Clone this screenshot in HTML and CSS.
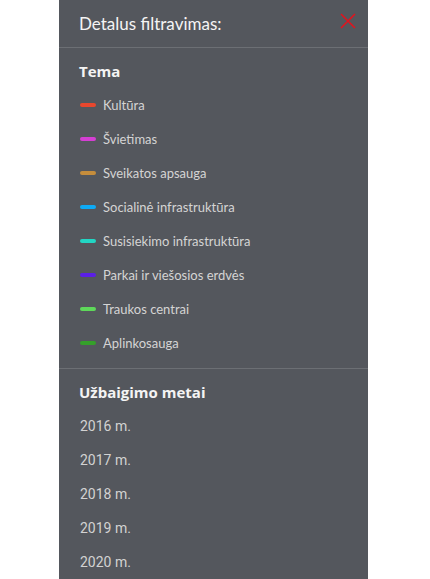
FILE: index.html
```html
<!DOCTYPE html>
<html lang="lt">
<head>
<meta charset="utf-8">
<title>Detalus filtravimas</title>
<link rel="stylesheet" href="styles.css">
</head>
<body>
<aside class="panel">
  <header class="panel-header">
    <h1 class="panel-title">Detalus filtravimas:</h1>
    <button class="close" aria-label="Uždaryti">
      <svg width="16" height="16" viewBox="0 0 16 16"><path d="M1 1 L15 15 M15 1 L1 15" stroke="#e0141e" stroke-width="1.6" fill="none"/></svg>
    </button>
  </header>
  <section class="section first">
    <h2 class="section-title">Tema</h2>
    <ul class="list">
      <li class="item"><span class="swatch" style="background:#e8472e"></span>Kultūra</li>
      <li class="item"><span class="swatch" style="background:#d53fd3"></span>Švietimas</li>
      <li class="item"><span class="swatch" style="background:#c58d3c"></span>Sveikatos apsauga</li>
      <li class="item"><span class="swatch" style="background:#0eaaf5"></span>Socialinė infrastruktūra</li>
      <li class="item"><span class="swatch" style="background:#22d6c4"></span>Susisiekimo infrastruktūra</li>
      <li class="item"><span class="swatch" style="background:#5b1fe6"></span>Parkai ir viešosios erdvės</li>
      <li class="item"><span class="swatch" style="background:#5ed85a"></span>Traukos centrai</li>
      <li class="item"><span class="swatch" style="background:#35a02a"></span>Aplinkosauga</li>
    </ul>
  </section>
  <section class="section second">
    <h2 class="section-title">Užbaigimo metai</h2>
    <ul class="list years">
      <li class="item year">2016 m.</li>
      <li class="item year">2017 m.</li>
      <li class="item year">2018 m.</li>
      <li class="item year">2019 m.</li>
      <li class="item year">2020 m.</li>
    </ul>
  </section>
</aside>
</body>
</html>
```

FILE: styles.css
```css
html, body {
  margin: 0;
  padding: 0;
  background: #ffffff;
  height: 100%;
}
body {
  font-family: "Lato", "Noto Sans", sans-serif;
  overflow: hidden;
}
.panel {
  margin-left: 59px;
  width: 309px;
  height: 579px;
  background: #54575d;
  color: #d6d6d6;
}
.panel-header {
  height: 47px;
  border-bottom: 1px solid #6c6f74;
  display: flex;
  align-items: center;
  justify-content: space-between;
  padding: 0 12px 0 20px;
}
.panel-title {
  margin: 0;
  font-size: 17px;
  font-weight: 400;
  color: #f4f4f4;
  padding-bottom: 1px;
}
.close {
  background: none;
  border: 0;
  padding: 0;
  width: 16px;
  height: 16px;
  margin-top: -6px;
  display: flex;
}
.section {
  padding: 6px 20px 8px 20px;
}
.section.first {
  border-bottom: 1px solid #6c6f74;
}
.section-title {
  margin: 0;
  height: 34px;
  line-height: 34px;
  font-family: "Open Sans", "Lato", sans-serif;
  font-size: 15px;
  font-weight: 700;
  color: #f4f4f4;
}
.list {
  list-style: none;
  margin: 0;
  padding: 0;
}
.item {
  height: 34px;
  display: flex;
  align-items: center;
  font-size: 13px;
  color: #d4d4d4;
  padding-left: 1px;
}
.swatch {
  width: 16px;
  height: 4px;
  border-radius: 2px;
  margin-right: 7px;
  flex: none;
}
.year {
  font-family: "Roboto", "Liberation Sans", sans-serif;
  font-size: 14px;
  padding-left: 1px;
  color: #d2d2d2;
}
```
